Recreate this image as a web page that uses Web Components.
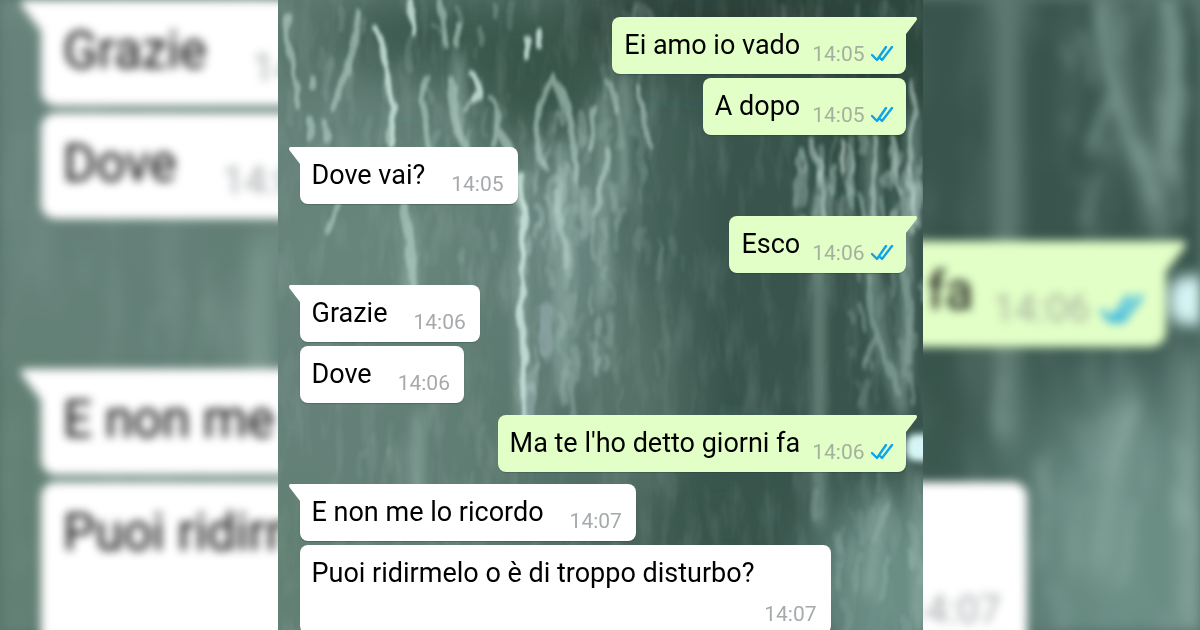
<!DOCTYPE html>
<html lang="it">
<head>
<meta charset="utf-8">
<meta name="viewport" content="width=device-width, initial-scale=1">
<title>Chat</title>
<style>
	html, body{
		height: 100%;
		margin: 0;
	}
	body{
		font-family: Roboto, "Liberation Sans", sans-serif;
		background: #58746c;
	}
</style>
</head>
<body>

<chat-stage>

	<chat-thread slot="backdrop" size="large" view="0 286 645 339" aria-hidden="true">
		<chat-bubble tail time="14:06">Grazie</chat-bubble>
		<chat-bubble time="14:06">Dove</chat-bubble>
		<chat-bubble out tail time="14:06">Ma te l'ho detto giorni fa</chat-bubble>
		<chat-bubble tail time="14:07">E non me lo ricordo</chat-bubble>
		<chat-bubble time="14:07">Puoi ridirmelo o è di troppo disturbo?</chat-bubble>
	</chat-thread>

	<chat-thread view="0 0 645 630">
		<chat-bubble out tail time="14:05">Ei amo io vado</chat-bubble>
		<chat-bubble out time="14:05">A dopo</chat-bubble>
		<chat-bubble tail time="14:05">Dove vai?</chat-bubble>
		<chat-bubble out tail time="14:06">Esco</chat-bubble>
		<chat-bubble tail time="14:06">Grazie</chat-bubble>
		<chat-bubble time="14:06">Dove</chat-bubble>
		<chat-bubble out tail time="14:06">Ma te l'ho detto giorni fa</chat-bubble>
		<chat-bubble tail time="14:07">E non me lo ricordo</chat-bubble>
		<chat-bubble time="14:07">Puoi ridirmelo o è di troppo disturbo?</chat-bubble>
	</chat-thread>

</chat-stage>

<script>

// seeded, so that both wallpapers get the same streaks
function random( seed ){

	return () => {

		seed = ( seed * 16807 ) % 2147483647

		return seed / 2147483647

	}

}

class RainWallpaper extends HTMLElement {

	constructor(){

		super()

		this.shadow = this.attachShadow({mode: 'open'})

	}

	connectedCallback(){

		this.render()

	}

	// x, y, width, height, amount, opacity
	get clusters(){

		return [
			[ 5, 0, 130, 140, 20, .14 ],
			[ 130, 0, 110, 50, 10, .22 ],
			[ 140, 70, 90, 70, 16, .2 ],
			[ 240, 110, 90, 130, 42, .32 ],
			[ 240, 190, 60, 200, 26, .26 ],
			[ 270, 180, 65, 190, 34, .26 ],
			[ 110, 200, 125, 80, 14, .14 ],
			[ 315, 0, 60, 230, 34, .18 ],
			[ 320, 220, 90, 180, 16, .1 ],
			[ 520, 130, 125, 90, 50, .32 ],
			[ 570, 220, 75, 170, 28, .2 ],
			[ 480, 0, 160, 10, 8, .14 ],
			[ 530, 470, 115, 150, 24, .14 ],
			[ 80, 400, 160, 80, 12, .1 ]
		]

	}

	streaks(){

		const next = random( 4711 )

		let d = ''

		for(const [x, y, w, h, amount, opacity] of this.clusters)

			for(let i = 0; i < amount; i++){

				const sx = x + next() * w

				const sy = y + next() * h

				const len = 8 + next() * 32

				const bend = next() * 18 - 9

				const width = 3 + next() * 5

				const alpha = opacity * ( .3 + next() * 1.3 )

				d += `<path d="M${sx.toFixed(1)} ${sy.toFixed(1)}q${bend.toFixed(1)} ${(len/2).toFixed(1)} ${(bend/2).toFixed(1)} ${len.toFixed(1)}" stroke-width="${width.toFixed(1)}" opacity="${alpha.toFixed(2)}"/>`

			}

		return d

	}

	render(){

		this.shadow.innerHTML = `
			<style>
				:host{
					display: block;
					overflow: hidden;
				}
				svg{
					display: block;
					width: 100%;
					height: 100%;
				}
			</style>
			<svg viewBox="${this.getAttribute('view')}" preserveAspectRatio="xMidYMin slice" aria-hidden="true">
				<defs>
					<linearGradient id="base">
						<stop offset="0" stop-color="#66827a"/>
						<stop offset=".3" stop-color="#607d74"/>
						<stop offset=".52" stop-color="#4c6960"/>
						<stop offset=".7" stop-color="#38544c"/>
						<stop offset="1" stop-color="#38544d"/>
					</linearGradient>
					<filter id="soft" filterUnits="userSpaceOnUse" x="-20" y="-20" width="685" height="680">
						<feTurbulence type="fractalNoise" baseFrequency=".07 .04" numOctaves="2" seed="3" result="noise"/>
						<feDisplacementMap in="SourceGraphic" in2="noise" scale="10" xChannelSelector="R" yChannelSelector="G"/>
						<feGaussianBlur stdDeviation="1.4 2.2"/>
					</filter>
					<filter id="hazy" filterUnits="userSpaceOnUse" x="-20" y="-20" width="685" height="680"><feGaussianBlur stdDeviation="4 8"/></filter>
					<filter id="fog" x="-100%" y="-100%" width="300%" height="300%"><feGaussianBlur stdDeviation="26"/></filter>
					<filter id="glow" x="-100%" y="-100%" width="300%" height="300%"><feGaussianBlur stdDeviation="3"/></filter>
					<filter id="grain" x="0" y="0" width="100%" height="100%">
						<feTurbulence type="fractalNoise" baseFrequency=".06 .016" numOctaves="3" seed="8"/>
						<feColorMatrix values="0 0 0 0 .68  0 0 0 0 .8  0 0 0 0 .76  1.8 0 0 0 -.82"/>
					</filter>
				</defs>
				<rect width="645" height="640" fill="url(#base)"/>
				<g filter="url(#fog)">
					<ellipse cx="185" cy="35" rx="150" ry="42" fill="#3b584d"/>
					<ellipse cx="260" cy="85" rx="70" ry="55" fill="#395549"/>
					<ellipse cx="480" cy="20" rx="190" ry="50" fill="#294138"/>
					<ellipse cx="600" cy="60" rx="60" ry="110" fill="#2a443b"/>
					<ellipse cx="20" cy="40" rx="40" ry="60" fill="#58756a"/>
					<ellipse cx="90" cy="250" rx="100" ry="60" fill="#67857b"/>
					<ellipse cx="285" cy="270" rx="45" ry="120" fill="#6c8882"/>
					<ellipse cx="345" cy="400" rx="50" ry="110" fill="#567269"/>
					<ellipse cx="450" cy="510" rx="70" ry="60" fill="#38554b"/>
					<ellipse cx="610" cy="590" rx="75" ry="100" fill="#6a8d84"/>
					<ellipse cx="10" cy="560" rx="30" ry="100" fill="#607f71"/>
				</g>
				<rect width="645" height="640" filter="url(#grain)" opacity=".15"/>
				<g fill="none" stroke="#9dbab1" stroke-linecap="round" stroke-width="14" opacity=".4" filter="url(#hazy)">
					<path d="M541 200V520M593 270L602 340L625 410M628 230V380M605 500L590 590M640 480V620"/>
					<path d="M243 180V420M285 150V390M325 100V300M132 220V300M140 420V520M180 130V60M345 80V200M595 140V220M635 120V220"/>
				</g>
				<g fill="none" stroke="#a5c0b8" stroke-linecap="round" filter="url(#soft)">
					${this.streaks()}
					<g stroke="#b4d0c8" stroke-width="6" opacity=".6">
						<path d="M10 15C10 45 14 70 20 88"/>
						<path d="M80 12C76 35 76 50 67 82L55 106"/>
						<path d="M20 82v24M35 80v8M32 118v20M47 120v18"/>
						<path d="M150 80L142 100Q148 115 147 128L150 148"/>
						<path d="M173 80C174 110 178 135 188 147" stroke-width="8"/>
						<path d="M213 97C224 112 219 125 215 145"/>
						<path d="M275 78C258 100 250 150 270 168"/>
						<path d="M275 78C292 104 298 145 299 182"/>
						<path d="M222 132C238 150 232 185 243 205" stroke-width="8"/>
						<path d="M163 0L165 26L169 45M181 25v20M317 110L311 150M330 150L318 215"/>
						<path d="M128 200C128 240 132 250 136 285" stroke-width="8"/>
						<path d="M60 205L50 230"/>
						<path d="M277 190C278 225 292 240 288 265"/>
					</g>
					<g stroke="#c9e4dc" stroke-width="6" opacity=".85">
						<path d="M96 28C110 55 108 80 115 112L113 145"/>
						<path d="M132 0L136 34"/>
						<path d="M250 40v18M261 30v16"/>
						<path d="M194 75Q204 92 198 98" stroke-width="7"/>
						<path d="M198 98L188 108M113 112L108 140" stroke-width="5" opacity=".6"/>
						<path d="M243 175C249 230 242 290 244 325C246 360 245 390 248 420"/>
					</g>
					<g stroke="#b9d2ca" stroke-width="5" opacity=".55">
						<path d="M532 138C538 160 544 170 546 218"/>
						<path d="M565 140v32" stroke="#dceae4"/>
						<path d="M598 138C592 170 597 190 596 222M615 138Q616 165 622 190"/>
						<path d="M634 82Q640 120 630 165L638 222"/>
						<path d="M330 80Q340 95 336 112M362 85Q360 110 372 145"/>
					</g>
					<g stroke="#90aea6" stroke-width="6" opacity=".5">
						<path d="M591 280Q592 310 597 334L587 366"/>
						<path d="M597 334Q610 350 621 395"/>
						<path d="M624 270Q634 310 631 362"/>
						<path d="M608 505L598 540M610 560L604 600"/>
					</g>
					<path d="M268 310V350M252 390V420" stroke="#b9cdd8" stroke-width="12" opacity=".35"/>
				</g>
				<rect x="628" y="434" width="30" height="27" rx="10" fill="#d6f6f5" filter="url(#glow)"/>
			</svg>
		`;

	}

}

customElements.define('rain-wallpaper', RainWallpaper)

class ChatBubble extends HTMLElement {

	constructor(){

		super()

		this.shadow = this.attachShadow({mode: 'open'})

	}

	static get observedAttributes(){

		return ['time', 'out']

	}

	attributeChangedCallback(){

		this.render()

	}

	connectedCallback(){

		this.render()

	}

	get ticks(){

		return `
			<svg viewBox="0 0 23 16" role="img" aria-label="Letto">
				<path d="M1 9l5 5L15 1M9 12l2 2L21 1"/>
			</svg>
		`

	}

	render(){

		const out = this.hasAttribute('out')

		this.shadow.innerHTML = `
			<style>
				:host{
					--paper: #fff;
					position: relative;
					display: flex;
					flex-wrap: wrap;
					justify-content: flex-end;
					align-items: flex-end;
					align-self: flex-start;
					box-sizing: border-box;
					max-width: calc(100% - var(--spare));
					gap: var(--row-gap) var(--time-gap);
					padding: var(--pad-top) var(--pad-right) var(--pad-bottom) var(--pad-left);
					border-radius: var(--radius);
					background: var(--paper);
					box-shadow: 0 1px 1px rgba(20, 40, 34, .25);
					color: #000;
				}
				:host([out]){
					--paper: #e2ffc7;
					align-self: flex-end;
					column-gap: var(--out-gap);
					padding-right: var(--pad-left);
				}
				:host([tail]){
					border-top-left-radius: 0;
				}
				:host([out][tail]){
					border-top-left-radius: var(--radius);
					border-top-right-radius: 0;
				}
				.tail{
					display: none;
					position: absolute;
					top: 0;
					right: 100%;
					width: var(--tail);
					height: auto;
					fill: var(--paper);
				}
				:host([tail]) .tail{
					display: block;
				}
				:host([out]) .tail{
					right: auto;
					left: 100%;
					transform: scaleX(-1);
				}
				.text{
					flex: 1 0 auto;
					padding-bottom: var(--drop);
					font-size: var(--text);
					line-height: var(--text-line);
				}
				.meta{
					display: flex;
					align-items: center;
					gap: var(--tick-gap);
					color: #a6aaac;
					font-size: var(--time);
					line-height: var(--time-line);
				}
				:host([out]) .meta{
					color: #a4b09d;
				}
				.meta svg{
					width: var(--tick);
					height: auto;
					fill: none;
					stroke: #0fa4e9;
					stroke-width: 2.4;
					stroke-linecap: round;
					stroke-linejoin: round;
				}
			</style>
			<svg class="tail" viewBox="0 0 11 17" aria-hidden="true"><path d="M11 0H1Q-1 1 1 4L11 17z"/></svg>
			<span class="text"><slot></slot></span>
			<span class="meta"><time>${this.getAttribute('time')}</time>${out ? this.ticks : ''}</span>
		`;

	}

}

customElements.define('chat-bubble', ChatBubble)

class ChatThread extends HTMLElement {

	constructor(){

		super()

		this.shadow = this.attachShadow({mode: 'open'})

	}

	connectedCallback(){

		this.render()

	}

	render(){

		this.shadow.innerHTML = `
			<style>
				:host{
					--text: 27px;
					--text-line: 33px;
					--time: 21px;
					--time-line: 24px;
					--pad-top: 12px;
					--pad-right: 14px;
					--pad-bottom: 8px;
					--pad-left: 12px;
					--drop: 4px;
					--row-gap: 8px;
					--time-gap: 26px;
					--out-gap: 12px;
					--tick: 23px;
					--tick-gap: 6px;
					--tail: 11px;
					--radius: 8px;
					--spare: 75px;
					--near: 4px;
					--far: 12px;
					--edge: 17px 17px 0 22px;
					position: relative;
					display: block;
					height: 100%;
				}
				:host([size=large]){
					--text: 51px;
					--text-line: 61px;
					--time: 39px;
					--time-line: 45px;
					--pad-top: 20px;
					--pad-right: 26px;
					--pad-bottom: 15px;
					--pad-left: 22px;
					--drop: 10px;
					--row-gap: 15px;
					--time-gap: 46px;
					--out-gap: 20px;
					--tick: 43px;
					--tick-gap: 11px;
					--tail: 20px;
					--radius: 15px;
					--spare: 139px;
					--near: 7px;
					--far: 22px;
					--edge: 0 34px 0 41px;
				}
				rain-wallpaper{
					position: absolute;
					inset: 0;
				}
				:host([size=large]) rain-wallpaper{
					filter: blur(3px);
				}
				.list{
					position: relative;
					display: flex;
					flex-direction: column;
					padding: var(--edge);
				}
				::slotted(*){
					margin-top: var(--near);
				}
				::slotted([tail]){
					margin-top: var(--far);
				}
				::slotted(:first-child){
					margin-top: 0;
				}
			</style>
			<rain-wallpaper view="${this.getAttribute('view')}"></rain-wallpaper>
			<div class="list"><slot></slot></div>
		`;

	}

}

customElements.define('chat-thread', ChatThread)

class ChatStage extends HTMLElement {

	constructor(){

		super()

		this.shadow = this.attachShadow({mode: 'open'})

	}

	connectedCallback(){

		this.render()

	}

	render(){

		this.shadow.innerHTML = `
			<style>
				:host{
					position: relative;
					display: flex;
					justify-content: center;
					height: 100%;
					overflow: hidden;
				}
				.backdrop{
					position: absolute;
					inset: 0;
					filter: blur(5px);
				}
				main{
					position: relative;
					width: 100%;
					max-width: 645px;
					overflow: hidden;
				}
			</style>
			<div class="backdrop"><slot name="backdrop"></slot></div>
			<main><slot></slot></main>
		`;

	}

}

customElements.define('chat-stage', ChatStage)

</script>
</body>
</html>
